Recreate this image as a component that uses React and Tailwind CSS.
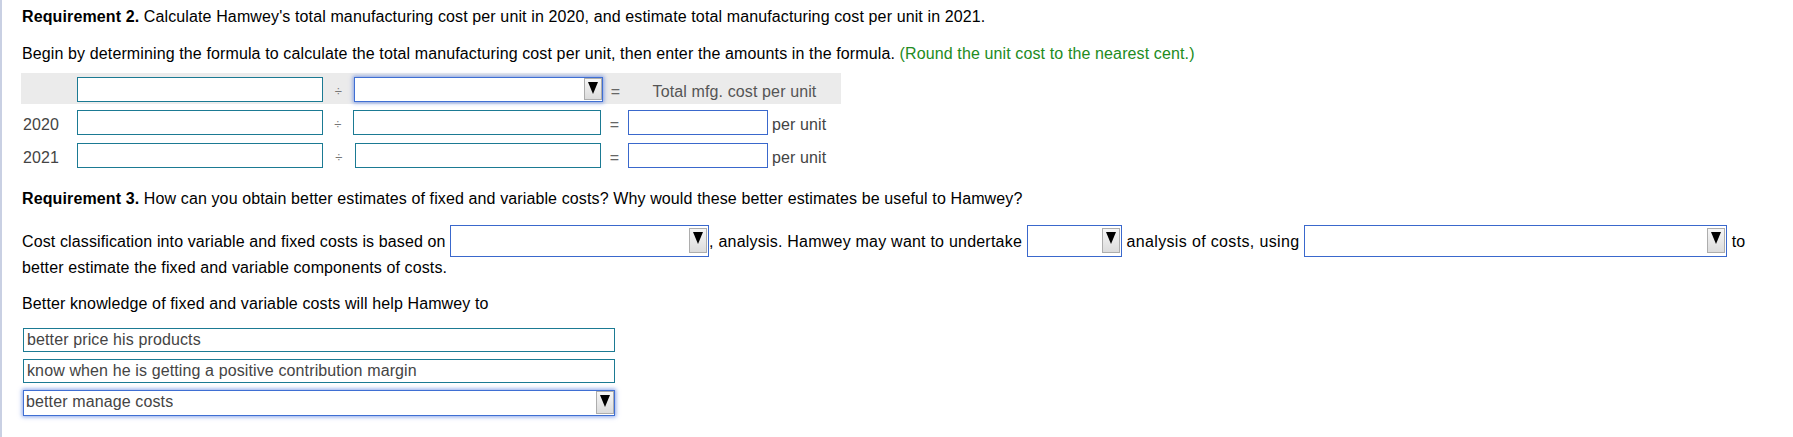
function Arrow({ h = 23 }) {
  return (
    <span
      className="flex w-[18px] shrink-0 items-start justify-center border border-[#adadad] bg-gradient-to-b from-[#f6f6f6] to-[#dcdcdc] pt-[3px]"
      style={{ height: h }}
    >
      <svg width="10" height="12" viewBox="0 0 10 12">
        <polygon points="0,0 10,0 5,12" fill="#000" />
      </svg>
    </span>
  )
}

function TealBox({ w, h = 25, children }) {
  return (
    <div
      className="border border-[#1b7a93] bg-white px-[3px] leading-[22px] text-[#444]"
      style={{ width: w, height: h }}
    >
      {children}
    </div>
  )
}

function BlueBox({ w, h = 25 }) {
  return <div className="border border-[#3a68cc] bg-white" style={{ width: w, height: h }} />
}

function FocusSelect({ w, h, text }) {
  return (
    <div
      className="flex items-start justify-between border border-[#3f6fd3] bg-white shadow-[0_0_4px_1px_rgba(60,105,220,0.6)]"
      style={{ width: w, height: h }}
    >
      <span className="truncate pl-[2px] leading-[22px] text-[#444]">{text}</span>
      <Arrow h={h - 3} />
    </div>
  )
}

function InlineSelect({ w }) {
  return (
    <span
      className="inline-block h-[32px] overflow-hidden border border-[#3a68cc] bg-white align-[-10px]"
      style={{ width: w }}
    >
      <span className="flex h-full items-start justify-end pt-[2px] pr-[1px]">
        <Arrow h={25} />
      </span>
    </span>
  )
}

function Row({ label, gray, children }) {
  return (
    <div className={`flex h-[31px] w-[820px] items-start pt-[4px] ${gray ? 'bg-[#ebebeb]' : 'mt-[2px]'}`}>
      <div className="w-[56px] pl-[2px] pt-[4px] text-[#444]">{label}</div>
      {children}
    </div>
  )
}

export default function App() {
  return (
    <div className="min-h-[437px] border-l-2 border-[#c9d0e3] bg-white pl-[20px] pt-[6px] font-['Liberation_Sans',Arial,sans-serif] text-[16px] leading-[21px] tracking-[0.12px] text-black">
      <p>
        <span className="font-bold">Requirement 2.</span> Calculate Hamwey's total manufacturing cost per unit in
        2020, and estimate total manufacturing cost per unit in 2021.
      </p>
      <p className="mt-[16px]">
        Begin by determining the formula to calculate the total manufacturing cost per unit, then enter the amounts
        in the formula. <span className="text-[#228b22]">(Round the unit cost to the nearest cent.)</span>
      </p>

      <div className="-ml-px mt-[9px]">
        <Row gray label="">
          <TealBox w={246} />
          <div className="w-[31px] pt-[4px] text-center text-[13px] text-[#777]">÷</div>
          <FocusSelect w={249} h={25} />
          <div className="w-[25px] pt-[4px] text-center text-[#666]">=</div>
          <div className="w-[213px] pt-[4px] text-center text-[#555]">Total mfg. cost per unit</div>
        </Row>
        <Row label="2020">
          <TealBox w={246} />
          <div className="w-[30px] pt-[4px] text-center text-[13px] text-[#777]">÷</div>
          <TealBox w={248} />
          <div className="w-[27px] pt-[4px] text-center text-[#666]">=</div>
          <BlueBox w={140} />
          <div className="pl-[4px] pt-[4px] text-[#444]">per unit</div>
        </Row>
        <Row label="2021">
          <TealBox w={246} />
          <div className="w-[32px] pt-[4px] text-center text-[13px] text-[#777]">÷</div>
          <TealBox w={246} />
          <div className="w-[27px] pt-[4px] text-center text-[#666]">=</div>
          <BlueBox w={140} />
          <div className="pl-[4px] pt-[4px] text-[#444]">per unit</div>
        </Row>
      </div>

      <p className="mt-[18px]">
        <span className="font-bold">Requirement 3.</span> How can you obtain better estimates of fixed and variable
        costs? Why would these better estimates be useful to Hamwey?
      </p>

      <p className="mt-[16px]">
        Cost classification into variable and fixed costs is based on <InlineSelect w={259} />
        <span className="tracking-[0.22px]">, analysis. Hamwey may want to undertake </span>
        <InlineSelect w={95} />
        <span className="tracking-[0.35px]"> analysis of costs, using </span>
        <InlineSelect w={423} /> to
        <br />
        better estimate the fixed and variable components of costs.
      </p>

      <p className="mt-[15px]">Better knowledge of fixed and variable costs will help Hamwey to</p>

      <div className="ml-px mt-[14px] flex flex-col gap-[7px]">
        <TealBox w={592} h={24}>
          better price his products
        </TealBox>
        <TealBox w={592} h={24}>
          know when he is getting a positive contribution margin
        </TealBox>
        <FocusSelect w={592} h={26} text="better manage costs" />
      </div>
    </div>
  )
}
